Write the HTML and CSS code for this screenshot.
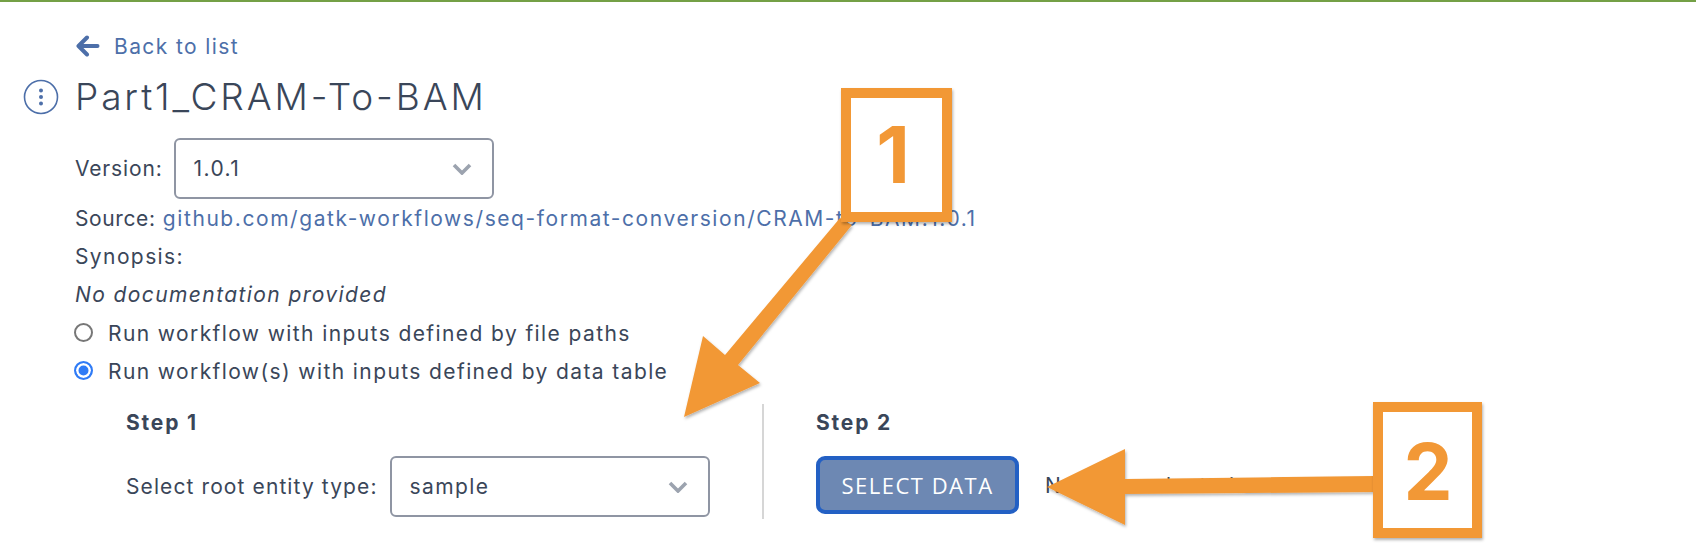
FILE: index.html
```html
<!DOCTYPE html>
<html lang="en">
<head>
    <meta charset="UTF-8">
    <meta name="viewport" content="width=device-width, initial-scale=1.0">
    <title>Part1_CRAM-To-BAM</title>
    <link rel="stylesheet" href="styles.css">
</head>
<body>
    <div class="page">
        <a class="back-link" href="#">
            <svg width="24" height="22" viewBox="0 0 24 22">
                <path d="M11 2.5 L2.5 11 L11 19.5 M3.5 11 H21.5" fill="none" stroke="#4d6fa9" stroke-width="4" stroke-linecap="round" stroke-linejoin="round"/>
            </svg>
            Back to list
        </a>
        <div class="title-row">
            <svg width="36" height="36" viewBox="0 0 36 36">
                <circle cx="18" cy="18" r="16.5" fill="none" stroke="#4d6fa9" stroke-width="1.6"/>
                <circle cx="18" cy="11.5" r="2" fill="#4d6fa9"/>
                <circle cx="18" cy="18" r="2" fill="#4d6fa9"/>
                <circle cx="18" cy="24.5" r="2" fill="#4d6fa9"/>
            </svg>
            <h1>Part1_CRAM-To-BAM</h1>
        </div>
        <div class="details">
            <div class="version-row">
                <span class="version-label">Version:</span>
                <div class="select version-select">
                    <span>1.0.1</span>
                    <svg width="20" height="12" viewBox="0 0 20 12"><path d="M2 2 L10 10 L18 2" fill="none" stroke="#9ca3af" stroke-width="3.6"/></svg>
                </div>
            </div>
            <div class="line"><span class="source-label">Source:</span> <a class="source-link" href="#">github.com/gatk-workflows/seq-format-conversion/CRAM-to-BAM:1.0.1</a></div>
            <div class="line">Synopsis:</div>
            <div class="line"><em>No documentation provided</em></div>
            <label class="radio-line"><span class="radio"></span>Run workflow with inputs defined by file paths</label>
            <label class="radio-line"><span class="radio checked"></span>Run workflow(s) with inputs defined by data table</label>
        </div>
        <div class="steps">
            <div class="step step-one">
                <h2>Step 1</h2>
                <div class="step-body">
                    <span class="root-label">Select root entity type:</span>
                    <div class="select root-select">
                        <span>sample</span>
                        <svg width="20" height="12" viewBox="0 0 20 12"><path d="M2 2 L10 10 L18 2" fill="none" stroke="#9ca3af" stroke-width="3.6"/></svg>
                    </div>
                </div>
            </div>
            <div class="step step-two">
                <h2>Step 2</h2>
                <div class="step-body">
                    <button class="select-data">SELECT DATA</button>
                    <span class="no-data">No data selected</span>
                </div>
            </div>
        </div>
    </div>

    <!-- orange callouts over the page -->
    <svg class="callouts" width="1696" height="546" viewBox="0 0 1696 546">
        <defs>
            <filter id="shadow" x="-10%" y="-10%" width="120%" height="120%">
                <feDropShadow dx="1" dy="2" stdDeviation="1.5" flood-color="#000" flood-opacity="0.3"/>
            </filter>
        </defs>
        <path filter="url(#shadow)" fill="#f29836" d="M840 218 L852 225 L738 365 L760 383 L684 417 L703 336 L725 355 Z"/>
        <path filter="url(#shadow)" fill="#f29836" d="M1373 476 L1373 492 L1125 494 L1125 525 L1047 487 L1125 449 L1125 479 Z"/>
        <rect class="callout-box" x="846" y="93" width="101" height="124"/>
        <rect class="callout-box" x="1378" y="407" width="99" height="126"/>
        <text class="callout-num" x="893" y="183">1</text>
        <text class="callout-num" x="1428" y="500">2</text>
    </svg>
</body>
</html>
```
FILE: styles.css
```css
body {
    margin: 0;
    background: #fff;
    color: #3a4659;
    font-family: "Inter", "Liberation Sans", sans-serif;
    font-size: 21px;
    letter-spacing: 1.4px;
    overflow: hidden;
}
.page {
    border-top: 2px solid #74a046;
    height: 546px;
    box-sizing: border-box;
    padding: 29px 0 0 23px;
}
a {
    color: #4d6fa9;
    text-decoration: none;
}
.back-link {
    display: flex;
    align-items: center;
    gap: 14px;
    margin-left: 53px;
    height: 30px;
}
.title-row {
    display: flex;
    align-items: center;
    gap: 16px;
    margin-top: 16px;
    height: 40px;
}
h1 {
    margin: 0;
    font-size: 37px;
    font-weight: 300;
    letter-spacing: 2.9px;
    line-height: 40px;
}
.details {
    margin-left: 52px;
    margin-top: 21px;
}
.version-row {
    display: flex;
    align-items: center;
    gap: 11px;
}
.version-label {
    letter-spacing: 0.85px;
}
.select {
    display: flex;
    align-items: center;
    justify-content: space-between;
    box-sizing: border-box;
    height: 61px;
    border: 2px solid #8f95a3;
    border-radius: 6px;
    padding: 0 20px 0 18px;
    background: #fff;
}
.version-select {
    width: 320px;
}
.line {
    height: 38px;
    line-height: 40px;
}
.source-label {
    letter-spacing: 0.6px;
}
.source-link {
    letter-spacing: 1.57px;
}
.radio-line {
    display: flex;
    align-items: center;
    box-sizing: border-box;
    height: 38px;
    padding-top: 2px;
    gap: 15px;
}
.radio {
    width: 19px;
    height: 19px;
    margin-left: -1px;
    margin-top: -2px;
    box-sizing: border-box;
    border: 2px solid #777;
    border-radius: 50%;
}
.radio.checked {
    border-color: #2f7bf6;
    background: #2f7bf6;
    box-shadow: inset 0 0 0 2.5px #fff;
}
.steps {
    display: flex;
    margin-left: 103px;
    margin-top: 15px;
}
.step {
    padding-top: 6px;
    height: 115px;
    box-sizing: border-box;
}
.step h2 {
    margin: 0 0 20px;
    font-size: 21px;
    font-weight: 700;
    letter-spacing: 1.8px;
    line-height: 26px;
}
.step-body {
    display: flex;
    align-items: center;
    gap: 12px;
}
.root-label {
    letter-spacing: 1.1px;
}
.step-one {
    width: 636px;
}
.step-two {
    border-left: 2px solid #d6d6d6;
    padding-left: 52px;
}
.root-select {
    width: 320px;
}
.select-data {
    width: 203px;
    height: 58px;
    border: 4px solid #2360c4;
    border-radius: 9px;
    background: #6d88b3;
    color: #fff;
    font-family: "Open Sans", sans-serif;
    font-size: 22px;
    letter-spacing: 1.5px;
}
.no-data {
    margin-left: 14px;
}
.callouts {
    position: absolute;
    left: 0;
    top: 0;
}
.callout-box {
    fill: #fff;
    stroke: #f29836;
    stroke-width: 10;
    filter: url(#shadow);
}
.callout-num {
    fill: #f29836;
    font-family: "Inter", sans-serif;
    font-size: 78px;
    font-weight: 700;
    letter-spacing: 0;
    text-anchor: middle;
}
```
